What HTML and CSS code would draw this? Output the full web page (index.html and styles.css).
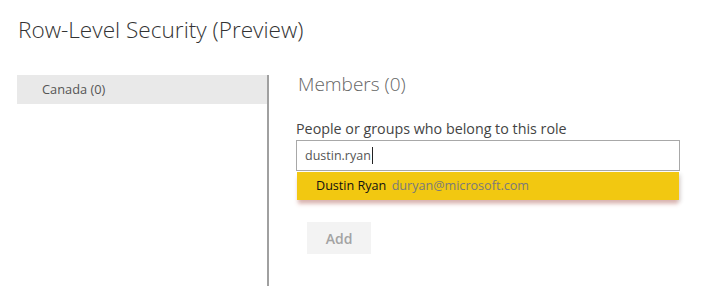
FILE: index.html
```html
<!DOCTYPE html>
<html lang="en">
<head>
    <meta charset="UTF-8">
    <title>Row-Level Security (Preview)</title>
    <link rel="stylesheet" href="styles.css">
</head>
<body>
    <!-- Header -->
    <h1 class="page-title">Row-Level Security (Preview)</h1>

    <div class="rls-layout">
        <!-- Roles list -->
        <div class="roles-panel">
            <div class="role-item">Canada (0)</div>
        </div>

        <!-- Members -->
        <div class="members-panel">
            <h2 class="members-title">Members (0)</h2>
            <label class="members-label" for="memberSearch">People or groups who belong to this role</label>
            <div class="search-box">
                <div class="search-input" id="memberSearch">dustin.ryan<span class="caret"></span></div>
                <div class="suggestion">
                    <span class="suggestion-name">Dustin Ryan</span>
                    <span class="suggestion-mail">duryan@microsoft.com</span>
                </div>
            </div>
            <button class="btn-add">Add</button>
        </div>
    </div>
</body>
</html>
```

FILE: styles.css
```css
/* General Reset */
body, html {
    margin: 0;
    padding: 0;
    font-family: 'Open Sans', 'Noto Sans', sans-serif;
    background-color: #fff;
    color: #333;
}
/* Header */
.page-title {
    margin: 0;
    padding: 14px 0 0 18px;
    height: 75px;
    box-sizing: border-box;
    font-size: 22.6px;
    font-weight: 300;
    color: #333;
}
/* Layout */
.rls-layout {
    display: flex;
    height: 211px;
}
.roles-panel {
    margin-left: 17px;
    width: 250px;
    border-right: 2px solid #a0a0a0;
}
.role-item {
    height: 29px;
    line-height: 29px;
    padding-left: 25px;
    background-color: #e9e9e9;
    font-size: 12.8px;
    color: #555;
}
/* Members panel */
.members-panel {
    padding-left: 27px;
    display: flex;
    flex-direction: column;
    align-items: flex-start;
}
.members-title {
    margin: 0 0 0 2px;
    height: 43px;
    font-size: 19px;
    font-weight: 300;
    color: #666;
    line-height: 18px;
}
.members-label {
    font-size: 14.3px;
    color: #444;
    height: 22px;
    line-height: 22px;
}
.search-box {
    width: 384px;
}
.search-input {
    height: 29px;
    line-height: 29px;
    border: 1px solid #a8a8a8;
    padding-left: 8px;
    font-size: 12.5px;
    color: #555;
}
.caret {
    display: inline-block;
    width: 1px;
    height: 17px;
    margin-left: 1px;
    vertical-align: -4px;
    background-color: #222;
}
.suggestion {
    margin: 1px 1px 0;
    height: 28px;
    line-height: 28px;
    padding-left: 19px;
    background-color: #f2c811;
    font-size: 12.6px;
    box-shadow: 0 5px 4px -1px rgba(200, 120, 110, 0.45), 2px 2px 4px rgba(0, 0, 0, 0.12);
}
.suggestion-name {
    color: #111;
    margin-right: 2px;
}
.suggestion-mail {
    color: #7a7a7a;
}
.btn-add {
    margin: 22px 0 0 11px;
    width: 64px;
    height: 32px;
    border: none;
    background-color: #f3f3f3;
    color: #a3a3a3;
    font-family: inherit;
    font-size: 14px;
    font-weight: 600;
}
```
